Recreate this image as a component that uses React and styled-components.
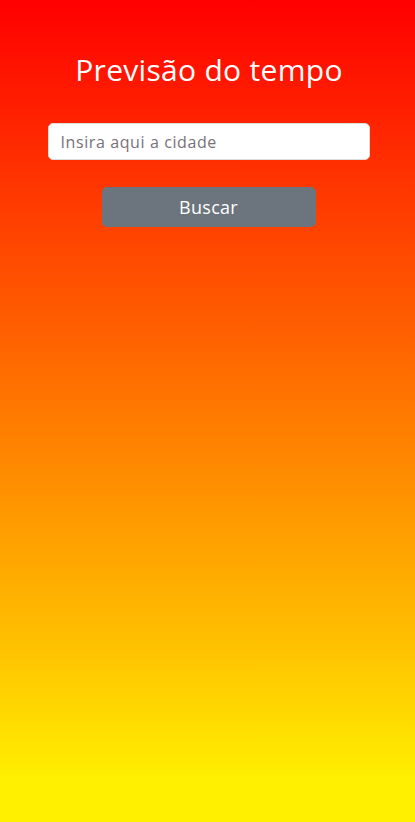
import React, { useState } from "react";
import styled, { createGlobalStyle } from "styled-components";

const GlobalStyle = createGlobalStyle`
  html, body {
    margin: 0;
    padding: 0;
  }
  body {
    font-family: "Open Sans", "Liberation Sans", sans-serif;
  }
`;

const Page = styled.div`
  min-height: 822px;
  background: linear-gradient(180deg, #ff0000 0%, #ff5a00 38%, #ffc000 78%, #fff000 95%, #fff000 100%);
  display: flex;
  flex-direction: column;
  align-items: center;
  padding-top: 50px;
  box-sizing: border-box;
`;

const Title = styled.h1`
  margin: 0 0 0 3px;
  color: #fff;
  font-weight: 400;
  font-size: 30px;
  line-height: 40px;
  letter-spacing: 0.3px;
`;

const Form = styled.form`
  width: 322px;
  display: flex;
  flex-direction: column;
  align-items: center;
  margin: 33px 0 0 2px;
  gap: 27px;
`;

const CityInput = styled.input`
  width: 100%;
  height: 37px;
  box-sizing: border-box;
  border: 1px solid #dcdcdc;
  border-radius: 5px;
  padding: 0 12px;
  font-family: inherit;
  font-size: 16px;
  letter-spacing: 0.6px;
  color: #333;
  outline: none;
  &::placeholder {
    color: #77707a;
  }
`;

const Button = styled.button`
  width: 214px;
  height: 40px;
  border: none;
  border-radius: 5px;
  background: #6c757d;
  color: #fff;
  font-family: inherit;
  font-size: 18px;
  letter-spacing: 0.3px;
  cursor: pointer;
`;

export default function App() {
  const [city, setCity] = useState("");

  return (
    <>
      <GlobalStyle />
      <Page>
        <Title>Previsão do tempo</Title>
        <Form onSubmit={(e) => e.preventDefault()}>
          <CityInput
            value={city}
            onChange={(e) => setCity(e.target.value)}
            placeholder="Insira aqui a cidade"
          />
          <Button type="submit">Buscar</Button>
        </Form>
      </Page>
    </>
  );
}
